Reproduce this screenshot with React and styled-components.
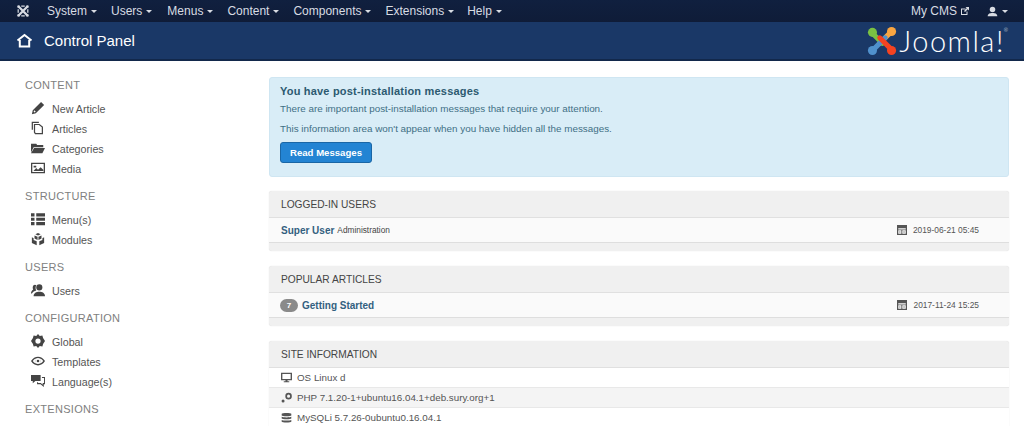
import React from "react";
import styled, { createGlobalStyle } from "styled-components";

const GlobalStyle = createGlobalStyle`
  html, body {
    margin: 0;
    padding: 0;
    background: #fff;
    overflow: hidden;
  }
  body {
    font-family: "Liberation Sans", Arial, sans-serif;
    font-size: 11px;
    color: #515151;
  }
`;

const Page = styled.div`
  width: 1024px;
  height: 426px;
  overflow: hidden;
`;

const Navbar = styled.div`
  display: flex;
  align-items: center;
  justify-content: space-between;
  height: 22px;
  padding: 0 16px;
  background: linear-gradient(#10203f, #0f1c38);
`;

const NavLeft = styled.div`
  display: flex;
  align-items: center;
`;

const NavItem = styled.span`
  display: flex;
  align-items: center;
  gap: 4px;
  margin-left: ${({ $gap }) => $gap}px;
  color: #d8dce3;
  font-size: 12px;
`;

const Caret = styled.i`
  display: inline-block;
  width: 0;
  height: 0;
  margin-top: 1px;
  border-top: 3px solid #d8dce3;
  border-left: 3px solid transparent;
  border-right: 3px solid transparent;
`;

const Subhead = styled.div`
  display: flex;
  align-items: center;
  justify-content: space-between;
  height: 37px;
  padding: 0 16px;
  background: #1a3867;
  border-bottom: 2px solid #12284b;
`;

const PageTitle = styled.div`
  display: flex;
  align-items: center;
  gap: 11px;
  color: #fff;
  font-size: 15px;
`;

const Logo = styled.div`
  display: flex;
  align-items: center;
  gap: 2px;
`;

const LogoWord = styled.span`
  font-family: Lato, "Liberation Sans", sans-serif;
  font-weight: 300;
  font-size: 29px;
  letter-spacing: 1.5px;
  line-height: 30px;
  color: #fff;
`;

const LogoMark = styled.sup`
  font-size: 5px;
  line-height: 5px;
  margin-left: -1px;
  vertical-align: 20px;
  letter-spacing: 0;
`;

const Body = styled.div`
  display: flex;
  padding-top: 16px;
`;

const Sidebar = styled.aside`
  width: 244px;
  padding: 1px 0 0 25px;
  box-sizing: border-box;
  margin-right: 25px;
  flex: none;
`;

const NavGroup = styled.div`
  margin-bottom: 10px;
`;

const GroupTitle = styled.div`
  color: #808080;
  font-size: 11px;
  line-height: 14px;
  letter-spacing: 0.3px;
  margin-bottom: 7px;
`;

const SideLink = styled.div`
  display: flex;
  align-items: center;
  height: 20px;
  padding-left: 6px;
  font-size: 10.7px;
  color: #555;
`;

const SideIcon = styled.span`
  display: flex;
  width: 21px;
  margin-top: -3px;
  color: #444;
`;

const Main = styled.main`
  width: 740px;
  flex: none;
`;

const Alert = styled.section`
  box-sizing: border-box;
  height: 100px;
  padding: 6px 10px;
  margin-bottom: 14px;
  background: #d9edf7;
  border: 1px solid #cfe6f2;
  border-radius: 3px;
  color: #3a6a80;
`;

const AlertTitle = styled.div`
  font-size: 11px;
  font-weight: bold;
  letter-spacing: 0.2px;
  line-height: 14px;
  color: #2c5a70;
  margin-bottom: 4px;
`;

const AlertText = styled.p`
  margin: 0 0 6px;
  font-size: 9.85px;
  line-height: 14px;
  color: #3f6f85;
`;

const Button = styled.button`
  display: block;
  width: 92px;
  height: 21px;
  padding: 0;
  margin-top: 2px;
  background: #2384d3;
  border: 1px solid #1a66a5;
  border-radius: 3px;
  color: #fff;
  font-family: inherit;
  font-size: 9.6px;
  font-weight: bold;
`;

const Well = styled.section`
  background: #f0f0f0;
  border-radius: 3px;
  box-shadow: 0 0 1px rgba(0, 0, 0, 0.18);
  margin-bottom: 15px;
  padding-bottom: ${({ $open }) => ($open ? 0 : 8)}px;
`;

const WellHead = styled.div`
  display: flex;
  align-items: center;
  box-sizing: border-box;
  height: 27px;
  padding-left: 12px;
  font-size: 10.2px;
  color: #444;
  border-bottom: 1px solid #e0e0e0;
`;

const Row = styled.div`
  display: flex;
  align-items: center;
  justify-content: space-between;
  box-sizing: border-box;
  height: 25px;
  padding: 0 30px 0 12px;
  background: #fafafa;
  border-bottom: 1px solid #dedede;
`;

const RowLeft = styled.div`
  display: flex;
  align-items: center;
  gap: 3px;
`;

const RowLink = styled.span`
  color: #33607f;
  font-size: 10px;
  font-weight: bold;
`;

const Small = styled.span`
  color: #444;
  font-size: 8.3px;
`;

const Badge = styled.span`
  display: flex;
  align-items: center;
  justify-content: center;
  width: 18px;
  height: 13px;
  margin: 0 1px 0 -1px;
  border-radius: 7px;
  background: #8a8a8a;
  color: #fff;
  font-size: 8px;
  font-weight: bold;
`;

const DateCell = styled.span`
  display: flex;
  align-items: center;
  gap: 6px;
  color: #555;
  font-size: 8.4px;
`;

const InfoRow = styled.div`
  display: flex;
  align-items: center;
  box-sizing: border-box;
  gap: 5px;
  height: 20px;
  padding-left: 12px;
  font-size: 9.8px;
  color: #555;
  background: ${({ $alt }) => ($alt ? "#f4f4f4" : "#fff")};
  border-bottom: 1px solid #e8e8e8;
`;

const Icon = ({ size = 14, children, vb = "0 0 16 16" }) => (
  <svg width={size} height={size} viewBox={vb} fill="currentColor">
    {children}
  </svg>
);

const JoomlaMark = () => (
  <svg width="14" height="14" viewBox="0 0 16 16" fill="#d8dce3" stroke="#d8dce3" strokeWidth="2.600">
    <path d="M3.500 3.500l9 9M12.500 3.500l-9 9" fill="none" />
    <circle cx="3" cy="3" r="1.600" stroke="none" />
    <circle cx="13" cy="3" r="1.600" stroke="none" />
    <circle cx="3" cy="13" r="1.600" stroke="none" />
    <circle cx="13" cy="13" r="1.600" stroke="none" />
    <path d="M6 2.500h4M6 13.500h4M2.500 6v4M13.500 6v4" strokeWidth="1.400" />
  </svg>
);

const HomeIcon = () => (
  <svg width="17" height="15" viewBox="0 0 17 15" fill="none" stroke="#fff" strokeWidth="2">
    <path d="M1.500 7.500L8.500 2l7 5.500" />
    <path d="M3.800 7v6.500h9.400V7" />
  </svg>
);

const CalendarIcon = () => (
  <Icon size={10}>
    <path fillRule="evenodd" d="M0 0h16v16H0zM2 5v2h12V5zM2 8.500V14h5V8.500zM8.500 8.500V14H14V8.500z" />
    <path d="M3.500 10h2v2.500h-2z" opacity="0.5" />
    <path d="M10 10h2.500v2.500H10z" opacity="0.5" />
  </Icon>
);

const icons = {
  pencil: (
    <Icon>
      <path d="M1 15l1-4.500L11.500 1l3.500 3.500L5.500 14zM3 12l1 1 1.500-.6-1.900-1.900z" />
    </Icon>
  ),
  stack: (
    <Icon>
      <path fill="none" stroke="currentColor" strokeWidth="1.400" d="M1.500 10V1.500H9M4 13V4h5.500L13 7v7.500H5z" />
    </Icon>
  ),
  folder: (
    <Icon>
      <path d="M0 3h6l1 1.500h7V7H3L0 13zM3.500 8H16l-3 6H0z" />
    </Icon>
  ),
  media: (
    <Icon>
      <path
        fillRule="evenodd"
        d="M0 2h16v12H0zM1.500 3.500v9h13v-9zM3 5.500h3v2H3zM3 11l3-3 2 2 3-3 3 3v1.500H3z"
      />
    </Icon>
  ),
  list: (
    <Icon>
      <path d="M0 1.500h4v3.500H0zM6 1.500h10v3.500H6zM0 6.500h4V10H0zM6 6.500h10V10H6zM0 11.500h4V15H0zM6 11.500h10V15H6z" />
    </Icon>
  ),
  cube: (
    <Icon>
      <path d="M8 1l3 1.500L8 4 5 2.500zM4 4l3.500 1.500V9L4 7.500zM12 4v3.500L8.500 9V5.500zM1 6l2 1v2l3.500 1.500V15L1 12.500zM15 6v6.500L9.500 15v-4.500L13 9V7z" />
    </Icon>
  ),
  users: (
    <Icon>
      <circle cx="9.500" cy="5" r="3.500" />
      <path d="M3 15c0-3.500 3-5 6.500-5s6.500 1.500 6.500 5zM4.500 2a3 3 0 0 1 1.500.5C5 4.500 5 6.500 6 8.500 4 9 2 10 1 12H0c0-2 1-3.500 2.500-4.500C1.500 5.500 2 2 4.500 2z" />
    </Icon>
  ),
  gear: (
    <Icon>
      <path
        fillRule="evenodd"
        d="M8 0l2 2.200 3-.6.800 3L16 8l-2.200 3.400-.8 3-3-.6L8 16l-2-2.200-3 .6-.8-3L0 8l2.200-3.400.8-3 3 .6zM8 5a3 3 0 1 0 0 6 3 3 0 0 0 0-6z"
      />
    </Icon>
  ),
  eye: (
    <Icon>
      <path
        fillRule="evenodd"
        d="M0 8c2-3.500 5-5 8-5s6 1.500 8 5c-2 3.500-5 5-8 5s-6-1.500-8-5zm8-3.500a3.500 3.500 0 1 0 0 7 3.500 3.500 0 0 0 0-7zM2 8c1 1.300 2 2.200 3.300 2.800C4.500 9 4.500 7 5.300 5.200 4 5.800 3 6.700 2 8zm8.700-2.800c.8 1.800.8 3.800 0 5.600C12 10.200 13 9.300 14 8c-1-1.300-2-2.200-3.300-2.800zM8 6.500a1.500 1.500 0 1 1 0 3 1.500 1.500 0 0 1 0-3z"
      />
    </Icon>
  ),
  chat: (
    <Icon>
      <path d="M0 1h11v7H5l-3 2.500V8H0z" />
      <path fill="none" stroke="currentColor" strokeWidth="1.200" d="M12.500 4H15.500v7H14v2.500L11 11H7.500V9.500" />
    </Icon>
  ),
};

const Brand = () => (
  <svg width="30" height="30" viewBox="0 0 33 33" fill="none" strokeWidth="5.500" strokeLinecap="round">
    <path d="M6 8l11 11" stroke="#7ac143" />
    <circle cx="6" cy="7" r="5" fill="#7ac143" />
    <path d="M26 7L14 19" stroke="#f9a541" />
    <circle cx="27" cy="6" r="5" fill="#f9a541" />
    <path d="M7 26l13-13" stroke="#5091cd" />
    <circle cx="6" cy="27" r="5" fill="#5091cd" />
    <path d="M27 26L14 13" stroke="#f44321" />
    <circle cx="27" cy="27" r="5" fill="#f44321" />
  </svg>
);

const menu = [
  ["System", 17],
  ["Users", 14],
  ["Menus", 15],
  ["Content", 14],
  ["Components", 14],
  ["Extensions", 14],
  ["Help", 13],
];

const groups = [
  {
    title: "CONTENT",
    links: [
      ["pencil", "New Article"],
      ["stack", "Articles"],
      ["folder", "Categories"],
      ["media", "Media"],
    ],
  },
  {
    title: "STRUCTURE",
    links: [
      ["list", "Menu(s)"],
      ["cube", "Modules"],
    ],
  },
  { title: "USERS", links: [["users", "Users"]] },
  {
    title: "CONFIGURATION",
    links: [
      ["gear", "Global"],
      ["eye", "Templates"],
      ["chat", "Language(s)"],
    ],
  },
  { title: "EXTENSIONS", links: [] },
];

export default function App() {
  return (
    <Page>
      <GlobalStyle />
      <Navbar>
        <NavLeft>
          <JoomlaMark />
          {menu.map(([label, gap]) => (
            <NavItem key={label} $gap={gap}>
              {label}
              <Caret />
            </NavItem>
          ))}
        </NavLeft>
        <NavLeft>
          <NavItem $gap={0}>
            My CMS
            <Icon size={8}>
              <path
                fillRule="evenodd"
                d="M0 3h9v2H2v9h9V9h2v7H0zM9 0h7v7l-2.500-2.500L8 10 6 8l5.500-5.500z"
              />
            </Icon>
          </NavItem>
          <NavItem $gap={18}>
            <Icon size={11}>
              <circle cx="8" cy="5" r="4" />
              <path d="M1 15c0-4 3-5 7-5s7 1 7 5z" />
            </Icon>
            <Caret />
          </NavItem>
        </NavLeft>
      </Navbar>
      <Subhead>
        <PageTitle>
          <HomeIcon />
          Control Panel
        </PageTitle>
        <Logo>
          <Brand />
          <LogoWord>
            Joomla!<LogoMark>®</LogoMark>
          </LogoWord>
        </Logo>
      </Subhead>
      <Body>
        <Sidebar>
          {groups.map((g) => (
            <NavGroup key={g.title}>
              <GroupTitle>{g.title}</GroupTitle>
              {g.links.map(([icon, label]) => (
                <SideLink key={label}>
                  <SideIcon>{icons[icon]}</SideIcon>
                  {label}
                </SideLink>
              ))}
            </NavGroup>
          ))}
        </Sidebar>
        <Main>
          <Alert>
            <AlertTitle>You have post-installation messages</AlertTitle>
            <AlertText>There are important post-installation messages that require your attention.</AlertText>
            <AlertText>This information area won't appear when you have hidden all the messages.</AlertText>
            <Button>Read Messages</Button>
          </Alert>
          <Well>
            <WellHead>LOGGED-IN USERS</WellHead>
            <Row>
              <RowLeft>
                <RowLink>Super User</RowLink>
                <Small>Administration</Small>
              </RowLeft>
              <DateCell>
                <CalendarIcon />
                2019-06-21 05:45
              </DateCell>
            </Row>
          </Well>
          <Well>
            <WellHead>POPULAR ARTICLES</WellHead>
            <Row>
              <RowLeft>
                <Badge>7</Badge>
                <RowLink>Getting Started</RowLink>
              </RowLeft>
              <DateCell>
                <CalendarIcon />
                2017-11-24 15:25
              </DateCell>
            </Row>
          </Well>
          <Well $open>
            <WellHead>SITE INFORMATION</WellHead>
            <InfoRow>
              <Icon size={11}>
                <path fillRule="evenodd" d="M0 1h16v11H9.500v1.500H12V15H4v-1.500h2.500V12H0zM2 3v7h12V3z" />
              </Icon>
              OS Linux d
            </InfoRow>
            <InfoRow $alt>
              <Icon size={11}>
                <circle cx="11" cy="6" r="3.500" fill="none" stroke="currentColor" strokeWidth="2.500" />
                <circle cx="3" cy="13" r="2.200" />
              </Icon>
              PHP 7.1.20-1+ubuntu16.04.1+deb.sury.org+1
            </InfoRow>
            <InfoRow>
              <Icon size={11}>
                <path d="M1 2.500C1 1 15 1 15 2.500V5C15 6.500 1 6.500 1 5zM1 7c2 1.200 12 1.200 14 0v2.500c0 1.500-14 1.500-14 0zM1 11.500c2 1.200 12 1.200 14 0V14c0 1.500-14 1.500-14 0z" />
              </Icon>
              MySQLi 5.7.26-0ubuntu0.16.04.1
            </InfoRow>
          </Well>
        </Main>
      </Body>
    </Page>
  );
}
